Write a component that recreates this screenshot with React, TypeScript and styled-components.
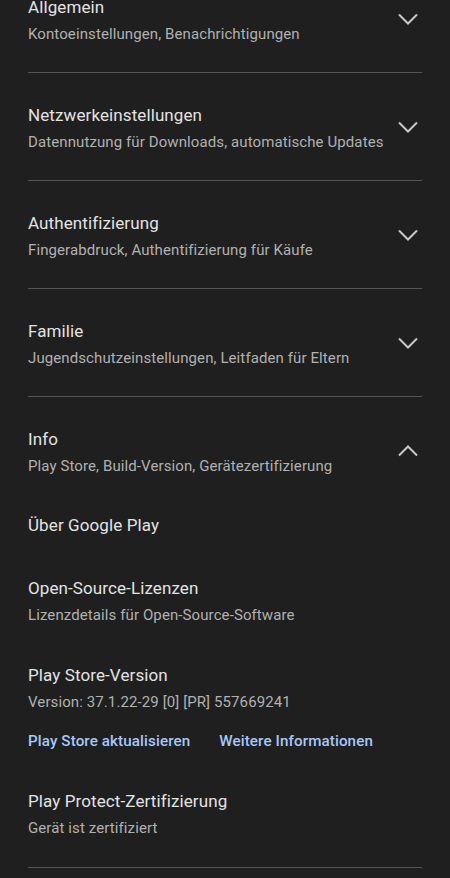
import React from "react";
import styled, { createGlobalStyle } from "styled-components";

const Global = createGlobalStyle`
  html, body {
    margin: 0;
    padding: 0;
    background: #1f1f1f;
    overflow: hidden;
  }
  body {
    font-family: Roboto, "Noto Sans", "Liberation Sans", sans-serif;
    -webkit-font-smoothing: antialiased;
  }
`;

const Page = styled.div`
  width: 450px;
  height: 878px;
  overflow: hidden;
  background: #1f1f1f;
`;

const Scroller = styled.div`
  margin-top: -35px;
  padding: 0 28px;
`;

const Section = styled.div`
  border-bottom: 1px solid #555555;
`;

const Header = styled.div`
  display: flex;
  align-items: center;
  padding: 29px 0 28px;
`;

const HeaderText = styled.div`
  flex: 1;
  min-width: 0;
`;

const Title = styled.div`
  font-size: 17px;
  line-height: 26px;
  color: #e3e3e3;
  letter-spacing: 0.1px;
`;

const Subtitle = styled.div`
  font-size: 15px;
  line-height: 20px;
  margin-top: 4px;
  color: #b1b1b1;
  letter-spacing: 0.1px;
`;

const Chevron = styled.svg`
  flex: none;
  width: 24px;
  height: 24px;
  margin-right: 2px;
`;

const Body = styled.div`
  margin-top: -28px;
  padding-bottom: 29px;
`;

const Item = styled.div`
  padding-top: 37px;

  &:first-child {
    padding-top: 36px;
  }
`;

const Links = styled.div`
  display: flex;
  gap: 29px;
  margin-top: 19px;
`;

const Link = styled.a`
  font-size: 15.2px;
  line-height: 20px;
  font-weight: 500;
  color: #a8c7fa;
  text-decoration: none;
  letter-spacing: 0.1px;
`;

function Arrow({ up }: { up?: boolean }) {
  return (
    <Chevron viewBox="0 0 24 24">
      <polyline
        points={up ? "3,16.5 12,7.5 21,16.5" : "3,7.5 12,16.5 21,7.5"}
        fill="none"
        stroke="#c8c8c8"
        strokeWidth="2"
      />
    </Chevron>
  );
}

const groups = [
  ["Allgemein", "Kontoeinstellungen, Benachrichtigungen"],
  ["Netzwerkeinstellungen", "Datennutzung für Downloads, automatische Updates"],
  ["Authentifizierung", "Fingerabdruck, Authentifizierung für Käufe"],
  ["Familie", "Jugendschutzeinstellungen, Leitfaden für Eltern"],
];

export default function App() {
  return (
    <Page>
      <Global />
      <Scroller>
        {groups.map(([t, s]) => (
          <Section key={t}>
            <Header>
              <HeaderText>
                <Title>{t}</Title>
                <Subtitle>{s}</Subtitle>
              </HeaderText>
              <Arrow />
            </Header>
          </Section>
        ))}
        <Section>
          <Header>
            <HeaderText>
              <Title>Info</Title>
              <Subtitle>Play Store, Build-Version, Gerätezertifizierung</Subtitle>
            </HeaderText>
            <Arrow up />
          </Header>
          <Body>
            <Item>
              <Title>Über Google Play</Title>
            </Item>
            <Item>
              <Title>Open-Source-Lizenzen</Title>
              <Subtitle>Lizenzdetails für Open-Source-Software</Subtitle>
            </Item>
            <Item>
              <Title>Play Store-Version</Title>
              <Subtitle>Version: 37.1.22-29 [0] [PR] 557669241</Subtitle>
              <Links>
                <Link href="#">Play Store aktualisieren</Link>
                <Link href="#">Weitere Informationen</Link>
              </Links>
            </Item>
            <Item>
              <Title>Play Protect-Zertifizierung</Title>
              <Subtitle>Gerät ist zertifiziert</Subtitle>
            </Item>
          </Body>
        </Section>
      </Scroller>
    </Page>
  );
}
